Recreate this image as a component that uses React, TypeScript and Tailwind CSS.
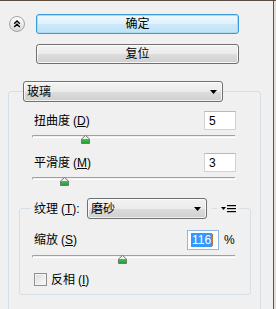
import React from "react";

const FONT = "font-['Liberation_Sans','Noto_Sans_CJK_SC',sans-serif]";

function Slider({ value, min, max }: { value: number; min: number; max: number }) {
  const width = 204;
  const left = ((value - min) / (max - min)) * (width - 9);
  return (
    <div className="relative h-[9px] w-[204px] -ml-[2px]">
      <div className="mt-[3px] h-[3px] rounded-full border border-[#a0a0a0] border-b-white border-r-white" />
      <svg className="absolute top-0" style={{ left }} width="9" height="9" viewBox="0 0 9 9">
        <defs>
          <linearGradient id="thumbg" x1="0" y1="0" x2="0" y2="1">
            <stop offset="0" stopColor="#ffffff" />
            <stop offset="0.45" stopColor="#e8ece8" />
            <stop offset="0.46" stopColor="#42c052" />
            <stop offset="1" stopColor="#1f9a33" />
          </linearGradient>
        </defs>
        <polygon points="0.5,4 4.5,0.5 8.5,4 8.5,8.5 0.5,8.5" fill="url(#thumbg)" stroke="#6f7a70" strokeWidth="1" />
      </svg>
    </div>
  );
}

function Field({ children }: { children: React.ReactNode }) {
  return (
    <div className="w-[32px] h-[19px] bg-white border border-[#cfd3d8] border-t-[#b5b8bd] flex items-center pl-[4px] text-[12px] leading-none text-black">
      {children}
    </div>
  );
}

function Combo({ label, w }: { label: string; w: string }) {
  return (
    <div
      className={`${w} h-[21px] rounded-[3px] border border-[#707070] bg-[linear-gradient(#f3f3f3_0%,#ebebeb_50%,#dddddd_50%,#cfcfcf_100%)] flex items-center justify-between pl-[3px] pr-[5px] text-[12px] text-black shadow-[inset_0_0_0_1px_rgba(255,255,255,0.7)]`}
    >
      <span className="leading-none">{label}</span>
      <svg width="7" height="4" viewBox="0 0 7 4">
        <polygon points="0,0 7,0 3.5,4" fill="#000" />
      </svg>
    </div>
  );
}

function Label({ text, k, tail = "" }: { text: string; k: string; tail?: string }) {
  return (
    <span className="text-[12px] leading-none text-black">
      {text}
      <span className="ml-[3px]">
        (<span className="underline">{k}</span>){tail}
      </span>
    </span>
  );
}

export default function App() {
  return (
    <div className={`w-[276px] h-[309px] overflow-hidden flex border-t border-[#5b4b40] bg-[#f0f0f0] ${FONT}`}>
      <div className="w-[273px] flex flex-col">
        <div className="mt-[13px] flex items-start">
          <svg className="ml-[9px] mt-[2px]" width="16" height="16" viewBox="0 0 16 16">
            <defs>
              <linearGradient id="circg" x1="0" y1="0" x2="0" y2="1">
                <stop offset="0" stopColor="#ffffff" />
                <stop offset="1" stopColor="#d6d6d6" />
              </linearGradient>
            </defs>
            <circle cx="8" cy="8" r="7.5" fill="url(#circg)" stroke="#a3a3a3" />
            <path d="M5.2 7.8 L8 5 L10.8 7.8 M5.2 11 L8 8.2 L10.8 11" fill="none" stroke="#000" strokeWidth="1.4" />
          </svg>
          <div className="ml-[11px] w-[203px] flex flex-col gap-[10px]">
            <div className="h-[20px] rounded-[3px] border border-[#3c9ad8] bg-[linear-gradient(#eef8fe_0%,#e0f2fc_50%,#cbe9fa_50%,#bfe3f7_100%)] shadow-[inset_0_0_0_1px_#a6dcf6] flex items-center justify-center text-[12px] leading-none text-black">
              确定
            </div>
            <div className="h-[20px] rounded-[3px] border border-[#707070] bg-[linear-gradient(#f2f2f2_0%,#ebebeb_50%,#dddddd_50%,#cfcfcf_100%)] shadow-[inset_0_0_0_1px_rgba(255,255,255,0.8)] flex items-center justify-center text-[12px] leading-none text-black">
              复位
            </div>
          </div>
        </div>

        <fieldset className="mt-[17px] ml-[8px] w-[253px] border border-[#d5dfe5] rounded-[3px] p-0">
          <legend className="ml-[14px] p-0">
            <Combo label="玻璃" w="w-[200px]" />
          </legend>

          <div className="pl-[10px] pb-[40px]">
            <div className="mt-[9px] pl-[15px] pr-[24px] flex items-center justify-between">
              <Label text="扭曲度" k="D" />
              <Field>5</Field>
            </div>
            <div className="mt-[5px] pl-[15px]">
              <Slider value={5} min={0} max={20} />
            </div>

            <div className="mt-[9px] pl-[15px] pr-[24px] flex items-center justify-between">
              <Label text="平滑度" k="M" />
              <Field>3</Field>
            </div>
            <div className="mt-[5px] pl-[15px]">
              <Slider value={3} min={1} max={15} />
            </div>

            <fieldset className="mt-[12px] w-[232px] border border-[#d5dfe5] rounded-[3px] p-0">
              <legend className="ml-[11px] p-0">
                <div className="flex items-center px-[3px]">
                  <span className="w-[53px] text-[12px] leading-none">
                    <Label text="纹理" k="T" tail=":" />
                  </span>
                  <Combo label="磨砂" w="w-[120px]" />
                  <div className="ml-[5px] w-[5px] h-px bg-[#d5dfe5]" />
                  <svg className="ml-[4px]" width="15" height="8" viewBox="0 0 15 8">
                    <polygon points="0,2 5,2 2.5,5" fill="#000" />
                    <rect x="6" y="0" width="9" height="1.2" fill="#000" />
                    <rect x="6" y="3" width="9" height="1.2" fill="#000" />
                    <rect x="6" y="6" width="9" height="1.2" fill="#000" />
                  </svg>
                </div>
              </legend>

              <div className="pl-[14px] pr-[14px] pb-[8px]">
                <div className="mt-[11px] flex items-center justify-between">
                  <Label text="缩放" k="S" />
                  <div className="flex items-center">
                    <div className="w-[32px] h-[20px] bg-white border border-[#8fb8e3] flex items-center pl-[3px] text-[12px] leading-none">
                      <span className="bg-[#3399ff] text-white px-[1px] py-[1px]">116</span>
                      <span className="w-px h-[12px] bg-[#b8742c]" />
                    </div>
                    <span className="ml-[5px] w-[12px] text-[12px] leading-none text-black">%</span>
                  </div>
                </div>
                <div className="mt-[5px]">
                  <Slider value={116} min={50} max={200} />
                </div>

                <div className="mt-[9px] flex items-center text-[12px] leading-none">
                  <div className="w-[13px] h-[13px] border border-[#8e8f8f] bg-[linear-gradient(135deg,#dcdcdc,#fbfbfb)] shadow-[inset_0_0_0_1px_#f4f4f4]" />
                  <span className="ml-[4px] leading-none">
                    <Label text="反相" k="I" />
                  </span>
                </div>
              </div>
            </fieldset>
          </div>
        </fieldset>
      </div>
      <div className="w-[3px] border-l border-[#5e5048] bg-[#e6e0dc]" />
    </div>
  );
}
